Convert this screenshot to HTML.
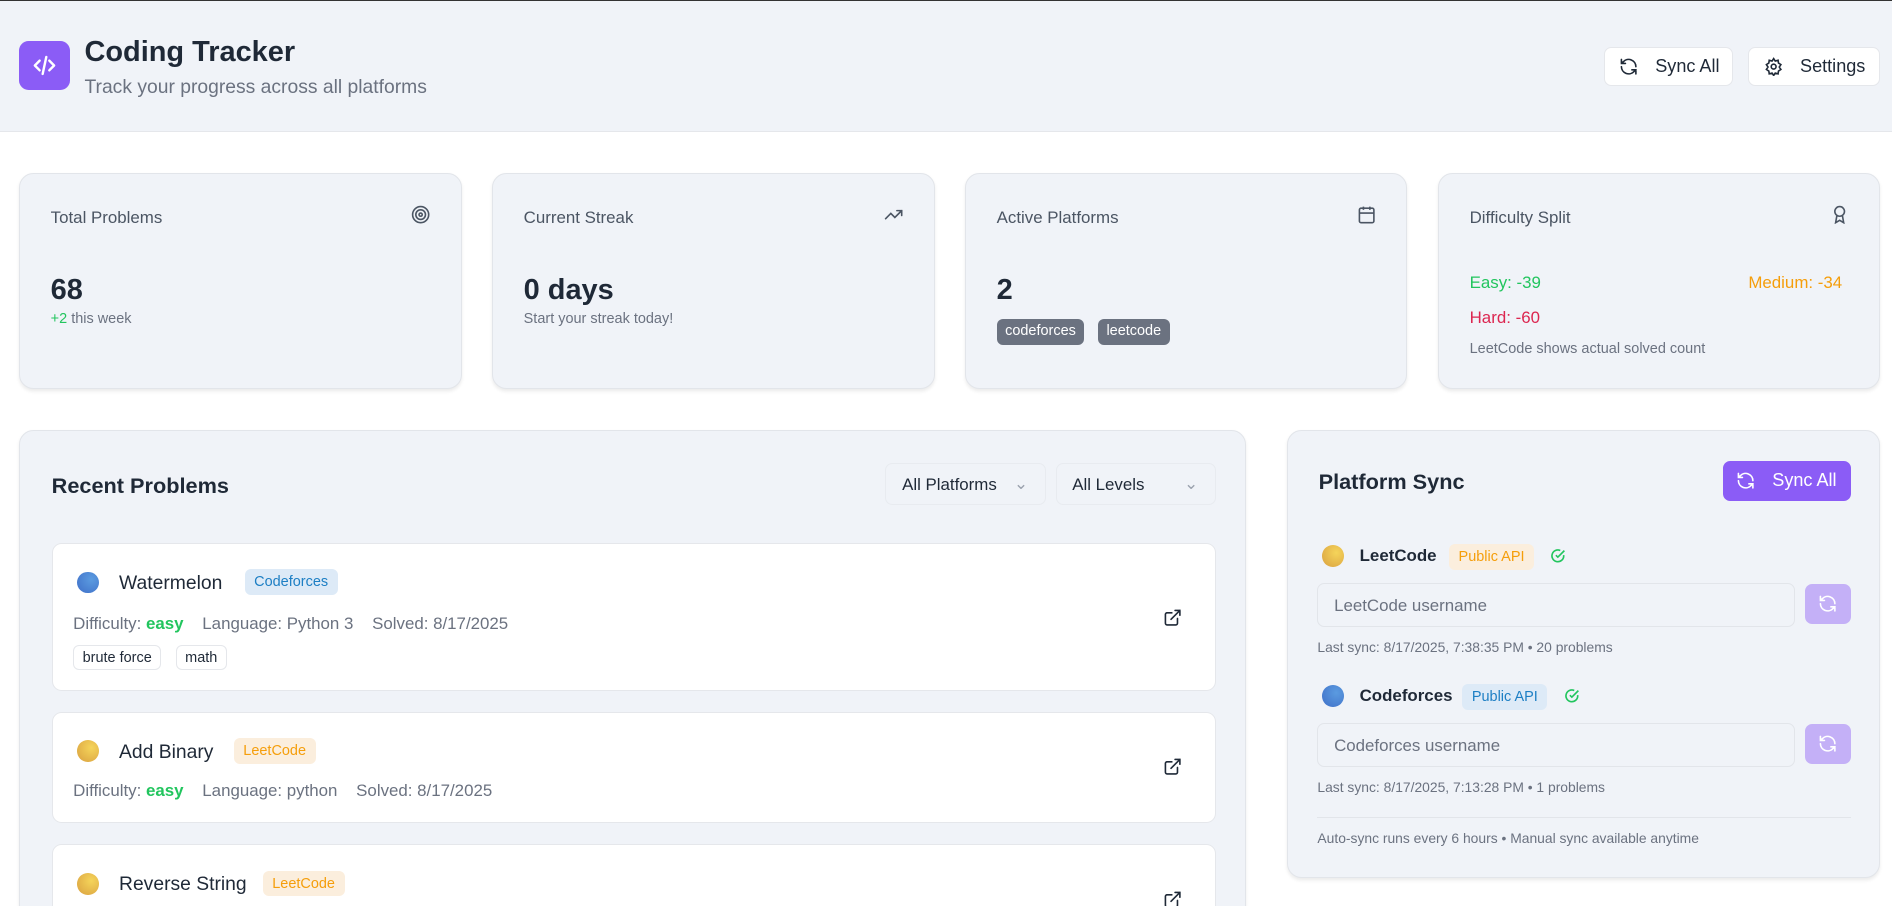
<!DOCTYPE html>
<html><head><meta charset="utf-8"><style>
*{box-sizing:border-box;margin:0;padding:0}
html,body{width:1892px;height:907px;overflow:hidden;background:#fff}
#r{zoom:1.2066;width:1568px;height:751px;overflow:hidden;position:relative;font-family:"Liberation Sans",sans-serif;color:#1f2937}
.a{position:absolute}
.card{position:absolute;background:#f0f3f8;border:1px solid #e2e5ea;border-radius:12px;box-shadow:0 2px 3px rgba(0,0,0,.08)}
.btn{position:absolute;background:#fff;border:1px solid #e5e7eb;border-radius:6px;font-size:15px;display:flex;align-items:center;gap:14px;padding-left:12px;color:#1f2937}
.st{font-size:14px;color:#4b5563}
.num{font-size:24px;font-weight:bold;color:#1f2937}
.sub{font-size:12px;color:#6b7280}
.item{position:absolute;left:26px;width:965px;background:#fff;border:1px solid #e5e7eb;border-radius:8px}
.ball{position:absolute;width:18px;height:18px;border-radius:50%}
.bl{background:radial-gradient(circle at 65% 35%,#5b9be0,#3f6fc8)}
.gd{background:radial-gradient(circle at 65% 35%,#f5d45a,#d9a040)}
.pn{position:absolute;font-size:16px;color:#1f2937}
.tag{position:absolute;font-size:12px;border-radius:5px;padding:4px 8px}
.cf{background:#ddeaf7;color:#1d7fc4}
.lc{background:#fbeedd;color:#f59e0b}
.meta{position:absolute;font-size:14px;color:#6b7280}
.meta b{color:#22c55e}
.chip{position:absolute;font-size:12px;border:1px solid #e5e7eb;border-radius:5px;padding:3px 7px;color:#1f2937}
.inp{position:absolute;left:24px;width:396px;height:37px;background:#f0f3f8;border:1px solid #e2e5ea;border-radius:6px;font-size:14px;color:#6b7280;padding:10px 13px}
.rb{position:absolute;left:428px;width:38px;height:33px;background:#c4b0f7;border-radius:6px;display:flex;align-items:center;justify-content:center}
</style></head><body><div id="r">
<div class="a" style="left:0;top:0;width:1568px;height:1px;background:#333"></div>
<div class="a" style="left:0;top:1px;width:1568px;height:108px;background:#f0f3f8;border-bottom:1px solid #e5e7eb"></div>
<div class="a" style="left:16px;top:34px;width:42px;height:41px;background:#8b5cf6;border-radius:8px;display:flex;align-items:center;justify-content:center">
<svg width="24" height="24" viewBox="0 0 24 24" fill="none" stroke="#fff" stroke-width="2" stroke-linecap="round" stroke-linejoin="round"><path d="M8 8l-4 4 4 4M16 8l4 4-4 4M13.5 5l-3 14"/></svg></div>
<div class="a" style="left:70px;top:30px;font-size:24px;font-weight:bold;color:#1f2937">Coding Tracker</div>
<div class="a" style="left:70px;top:64px;font-size:16px;color:#6b7280">Track your progress across all platforms</div>
<div class="btn" style="left:1329px;top:39px;width:107px;height:32px"><svg width="16" height="16" viewBox="0 0 24 24" fill="none" stroke="#1f2937" stroke-width="2" stroke-linecap="round"><path d="M21 12a9 9 0 0 0-15.5-6.2L3 8M3 3v5h5M3 12a9 9 0 0 0 15.5 6.2L21 16M21 21v-5h-5"/></svg>Sync All</div>
<div class="btn" style="left:1449px;top:39px;width:109px;height:32px"><svg width="16" height="16" viewBox="0 0 24 24" fill="none" stroke="#1f2937" stroke-width="2"><circle cx="12" cy="12" r="3"/><path d="M12 2l2 3 3.5-1 .5 3.5 3 2-2 3 2 3-3 2-.5 3.5-3.5-1-2 3-2-3-3.5 1-.5-3.5-3-2 2-3-2-3 3-2L6.5 4 10 5z"/></svg>Settings</div>

<div class="card" style="left:16px;top:143px;width:367px;height:179px"></div>
<div class="card" style="left:408px;top:143px;width:367px;height:179px"></div>
<div class="card" style="left:800px;top:143px;width:366px;height:179px"></div>
<div class="card" style="left:1192px;top:143px;width:366px;height:179px"></div>
<div class="a st" style="left:42px;top:172px">Total Problems</div>
<svg class="a" style="left:341px;top:170px" width="16" height="16" viewBox="0 0 24 24" fill="none" stroke="#4b5563" stroke-width="2"><circle cx="12" cy="12" r="10"/><circle cx="12" cy="12" r="6"/><circle cx="12" cy="12" r="2"/></svg>
<div class="a num" style="left:42px;top:227px">68</div>
<div class="a sub" style="left:42px;top:258px"><span style="color:#22c55e">+2</span> this week</div>
<div class="a st" style="left:434px;top:172px">Current Streak</div>
<svg class="a" style="left:733px;top:170px" width="16" height="16" viewBox="0 0 24 24" fill="none" stroke="#4b5563" stroke-width="2" stroke-linecap="round"><path d="M22 7l-8.5 8.5-5-5L2 17M16 7h6v6"/></svg>
<div class="a num" style="left:434px;top:227px">0 days</div>
<div class="a sub" style="left:434px;top:258px">Start your streak today!</div>
<div class="a st" style="left:826px;top:172px">Active Platforms</div>
<svg class="a" style="left:1125px;top:170px" width="16" height="16" viewBox="0 0 24 24" fill="none" stroke="#4b5563" stroke-width="2"><rect x="3" y="4" width="18" height="18" rx="2"/><path d="M16 2v4M8 2v4M3 10h18"/></svg>
<div class="a num" style="left:826px;top:227px">2</div>
<div class="a" style="left:826px;top:264px;background:#6b7280;color:#fff;font-size:12px;border-radius:5px;padding:4px 7px;height:22px">codeforces</div>
<div class="a" style="left:910px;top:264px;background:#6b7280;color:#fff;font-size:12px;border-radius:5px;padding:4px 7px;height:22px">leetcode</div>
<div class="a st" style="left:1218px;top:172px">Difficulty Split</div>
<svg class="a" style="left:1517px;top:170px" width="16" height="16" viewBox="0 0 24 24" fill="none" stroke="#4b5563" stroke-width="2"><circle cx="12" cy="8" r="6"/><path d="M15.5 13.5L17 22l-5-3-5 3 1.5-8.5"/></svg>
<div class="a" style="left:1218px;top:226px;font-size:14px;color:#22c55e">Easy: -39</div>
<div class="a" style="left:1449px;top:226px;font-size:14px;color:#f59e0b">Medium: -34</div>
<div class="a" style="left:1218px;top:255px;font-size:14px;color:#dc2650">Hard: -60</div>
<div class="a sub" style="left:1218px;top:283px">LeetCode shows actual solved count</div>

<div class="card" style="left:16px;top:356px;width:1017px;height:420px"><div style="position:relative">
<div class="a" style="left:26px;top:35px;font-size:18px;font-weight:bold">Recent Problems</div>
<div class="a" style="left:717px;top:27px;width:133px;height:35px;background:#f0f3f8;border:1px solid #e8ebf0;border-radius:6px;font-size:14px;padding:9px 13px;color:#1f2937">All Platforms <span style="position:absolute;right:14px;top:7px;color:#9ca3af">⌄</span></div>
<div class="a" style="left:858px;top:27px;width:133px;height:35px;background:#f0f3f8;border:1px solid #e8ebf0;border-radius:6px;font-size:14px;padding:9px 13px;color:#1f2937">All Levels <span style="position:absolute;right:14px;top:7px;color:#9ca3af">⌄</span></div>
<div class="item" style="top:93px;height:123px">
<div class="ball bl" style="left:20px;top:23px"></div><div class="pn" style="left:55px;top:24px">Watermelon</div><div class="tag cf" style="left:159px;top:21px">Codeforces</div>
<div class="meta" style="left:17px;top:58px">Difficulty: <b>easy</b> &nbsp;&nbsp; Language: Python 3 &nbsp;&nbsp; Solved: 8/17/2025</div>
<div class="chip" style="left:17px;top:84px">brute force</div><div class="chip" style="left:102px;top:84px">math</div>
<svg class="a" style="left:920px;top:53px" width="16" height="16" viewBox="0 0 24 24" fill="none" stroke="#1f2937" stroke-width="2" stroke-linecap="round"><path d="M15 3h6v6M10 14L21 3M18 13v6a2 2 0 0 1-2 2H5a2 2 0 0 1-2-2V8a2 2 0 0 1 2-2h6"/></svg></div>
<div class="item" style="top:233px;height:92px">
<div class="ball gd" style="left:20px;top:23px"></div><div class="pn" style="left:55px;top:24px">Add Binary</div><div class="tag lc" style="left:150px;top:21px">LeetCode</div>
<div class="meta" style="left:17px;top:57px">Difficulty: <b>easy</b> &nbsp;&nbsp; Language: python &nbsp;&nbsp; Solved: 8/17/2025</div>
<svg class="a" style="left:920px;top:37px" width="16" height="16" viewBox="0 0 24 24" fill="none" stroke="#1f2937" stroke-width="2" stroke-linecap="round"><path d="M15 3h6v6M10 14L21 3M18 13v6a2 2 0 0 1-2 2H5a2 2 0 0 1-2-2V8a2 2 0 0 1 2-2h6"/></svg></div>
<div class="item" style="top:343px;height:92px">
<div class="ball gd" style="left:20px;top:23px"></div><div class="pn" style="left:55px;top:24px">Reverse String</div><div class="tag lc" style="left:174px;top:21px">LeetCode</div>
<svg class="a" style="left:920px;top:37px" width="16" height="16" viewBox="0 0 24 24" fill="none" stroke="#1f2937" stroke-width="2" stroke-linecap="round"><path d="M15 3h6v6M10 14L21 3M18 13v6a2 2 0 0 1-2 2H5a2 2 0 0 1-2-2V8a2 2 0 0 1 2-2h6"/></svg></div>
</div></div>

<div class="card" style="left:1067px;top:356px;width:491px;height:372px"><div style="position:relative">
<div class="a" style="left:25px;top:32px;font-size:18px;font-weight:bold">Platform Sync</div>
<div class="a" style="left:360px;top:25px;width:106px;height:33px;background:#8b5cf6;border-radius:6px;color:#fff;font-size:15px;display:flex;align-items:center;padding-left:11px;gap:14px"><svg width="16" height="16" viewBox="0 0 24 24" fill="none" stroke="#fff" stroke-width="2" stroke-linecap="round"><path d="M21 12a9 9 0 0 0-15.5-6.2L3 8M3 3v5h5M3 12a9 9 0 0 0 15.5 6.2L21 16M21 21v-5h-5"/></svg>Sync All</div>
<div class="ball gd" style="left:28px;top:95px"></div>
<div class="a" style="left:59px;top:96px;font-size:14px;font-weight:bold">LeetCode</div>
<div class="tag lc" style="left:133px;top:94px">Public API</div>
<svg class="a" style="left:217px;top:97px" width="13" height="13" viewBox="0 0 24 24" fill="none" stroke="#22c55e" stroke-width="2.5"><path d="M21 11v1a9 9 0 1 1-5.3-8.2"/><path d="M9 11l3 3L22 4"/></svg>
<div class="inp" style="top:126px">LeetCode username</div>
<div class="rb" style="top:127px"><svg width="16" height="16" viewBox="0 0 24 24" fill="none" stroke="#fff" stroke-width="2" stroke-linecap="round"><path d="M21 12a9 9 0 0 0-15.5-6.2L3 8M3 3v5h5M3 12a9 9 0 0 0 15.5 6.2L21 16M21 21v-5h-5"/></svg></div>
<div class="a" style="left:24px;top:173px;font-size:11.5px;color:#6b7280">Last sync: 8/17/2025, 7:38:35 PM • 20 problems</div>
<div class="ball bl" style="left:28px;top:211px"></div>
<div class="a" style="left:59px;top:212px;font-size:14px;font-weight:bold">Codeforces</div>
<div class="tag cf" style="left:144px;top:210px">Public API</div>
<svg class="a" style="left:228px;top:213px" width="13" height="13" viewBox="0 0 24 24" fill="none" stroke="#22c55e" stroke-width="2.5"><path d="M21 11v1a9 9 0 1 1-5.3-8.2"/><path d="M9 11l3 3L22 4"/></svg>
<div class="inp" style="top:242px">Codeforces username</div>
<div class="rb" style="top:243px"><svg width="16" height="16" viewBox="0 0 24 24" fill="none" stroke="#fff" stroke-width="2" stroke-linecap="round"><path d="M21 12a9 9 0 0 0-15.5-6.2L3 8M3 3v5h5M3 12a9 9 0 0 0 15.5 6.2L21 16M21 21v-5h-5"/></svg></div>
<div class="a" style="left:24px;top:289px;font-size:11.5px;color:#6b7280">Last sync: 8/17/2025, 7:13:28 PM • 1 problems</div>
<div class="a" style="left:24px;top:320px;width:442px;height:1px;background:#e2e5ea"></div>
<div class="a" style="left:24px;top:331px;font-size:11.5px;color:#6b7280">Auto-sync runs every 6 hours • Manual sync available anytime</div>
</div></div>
</div></body></html>
